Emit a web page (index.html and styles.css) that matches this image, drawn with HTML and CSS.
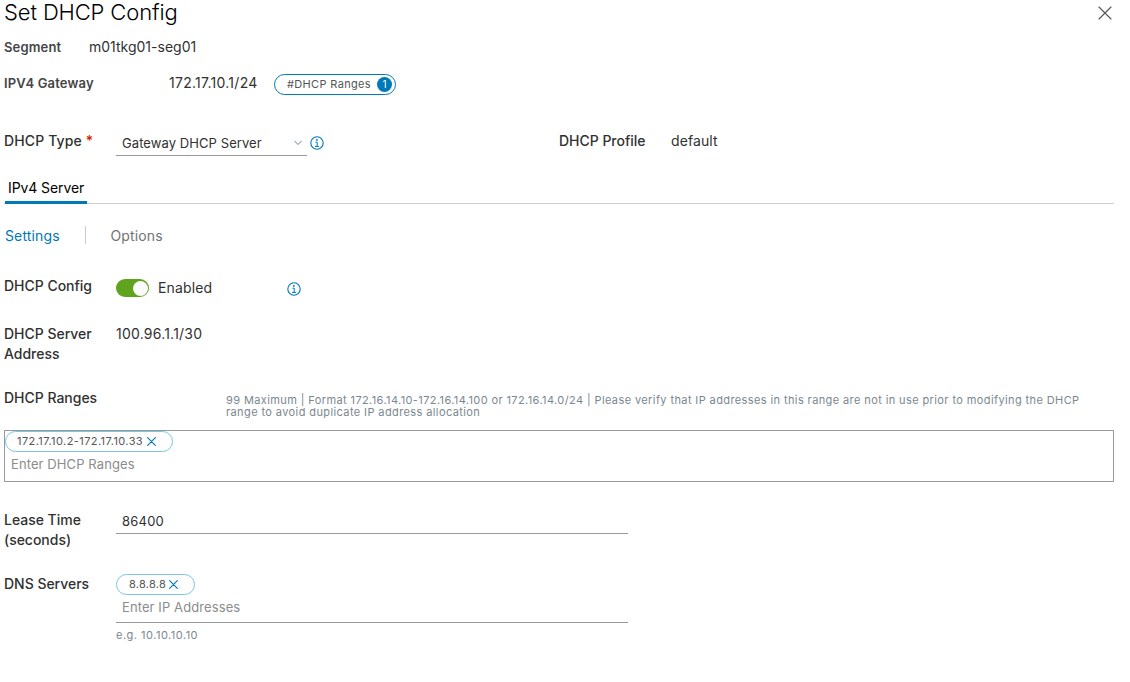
FILE: index.html
```
<!DOCTYPE html>
<html lang="en">
<head>
<meta charset="utf-8">
<title>Set DHCP Config</title>
<link rel="stylesheet" href="styles.css">
</head>
<body>
<svg width="0" height="0" class="sprite" aria-hidden="true">
  <symbol id="info" viewBox="0 0 14 14">
    <circle cx="7" cy="7" r="6.2" fill="none" stroke="currentColor" stroke-width="1.1"/>
    <circle cx="6.9" cy="3.9" r="0.95" fill="currentColor"/>
    <path d="M5.4 6.2h1.8v4M5 10.4h4" fill="none" stroke="currentColor" stroke-width="1"/>
  </symbol>
  <symbol id="cross" viewBox="0 0 14 14">
    <path d="M1 1l12 12M13 1L1 13" fill="none" stroke="currentColor" stroke-width="var(--cross-stroke)" stroke-linecap="round"/>
  </symbol>
</svg>
<main class="dialog">
  <header class="header">
    <h1 class="title">Set DHCP Config</h1>
    <svg class="close"><use href="#cross"/></svg>
  </header>

  <section class="summary">
    <div class="summary-row segment"><span class="summary-label">Segment</span><span class="segment-name">m01tkg01-seg01</span></div>
    <div class="summary-row gateway">
      <span class="summary-label">IPV4 Gateway</span><span class="digits">172.17.10.1/24</span>
      <span class="ranges-pill"><span class="pill-text">#DHCP Ranges</span><span class="count">1</span></span>
    </div>
  </section>

  <section class="type-row">
    <label class="label">DHCP Type <span class="required">*</span></label>
    <div class="select"><span>Gateway DHCP Server</span>
      <svg class="caret" viewBox="0 0 8 6"><path d="M0.5 1L4 4.5 7.5 1" fill="none" stroke="currentColor" stroke-width="1.2"/></svg>
    </div>
    <svg class="info type-info"><use href="#info"/></svg>
    <div class="profile"><span class="label">DHCP Profile</span><span>default</span></div>
  </section>

  <nav class="tabs"><span class="tab">IPv4 Server</span></nav>
  <nav class="subtabs"><span class="subtab active">Settings</span><span class="subtab">Options</span></nav>

  <section class="field config">
    <label class="label">DHCP Config</label>
    <div class="toggle-group"><span class="toggle"></span><span class="enabled">Enabled</span><svg class="info"><use href="#info"/></svg></div>
  </section>

  <section class="field address">
    <label class="label">DHCP Server Address</label>
    <span class="digits">100.96.1.1/30</span>
  </section>

  <section class="field ranges">
    <label class="label">DHCP Ranges</label>
    <p class="help range-help"><span>99 Maximum | Format 172.16.14.10-172.16.14.100 or 172.16.14.0/24 | Please verify that IP addresses in this range are not in use prior to modifying the DHCP</span><br>range to avoid duplicate IP address allocation</p>
  </section>
  <div class="range-box">
    <span class="chip"><span>172.17.10.2-172.17.10.33</span><svg class="remove"><use href="#cross"/></svg></span>
    <span class="placeholder">Enter DHCP Ranges</span>
  </div>

  <section class="field lease">
    <label class="label">Lease Time (seconds)</label>
    <div class="input digits">86400</div>
  </section>

  <section class="field dns">
    <label class="label">DNS Servers</label>
    <div class="dns-control">
      <div class="dns-input">
        <span class="chip"><span class="dns-text">8.8.8.8</span><svg class="remove"><use href="#cross"/></svg></span>
        <span class="placeholder">Enter IP Addresses</span>
      </div>
      <p class="help example">e.g. 10.10.10.10</p>
    </div>
  </section>
</main>
</body>
</html>
```
FILE: styles.css
```
* { box-sizing: border-box; }
body { margin: 0; background: #fff; color: #313131; font: 14px/20px Inter, "Noto Sans", sans-serif; letter-spacing: 0.08px; }
.sprite { position: absolute; }
.dialog { display: flex; flex-direction: column; height: 682px; padding: 0 16px 0 4px; overflow: hidden; }
.header { display: flex; justify-content: space-between; height: 37px; }
.title { margin: 0; font-size: 22px; line-height: 24px; font-weight: 350; letter-spacing: -0.13px; color: #000; }
.close { --cross-stroke: 1.15; width: 14px; height: 14px; margin: 6px 2px 0 0; color: #565656; }
.digits { letter-spacing: 0.22px; }
.label { font-weight: 500; letter-spacing: -0.02px; }

.summary { height: 94px; }
.summary-row { display: flex; height: 36px; }
.summary-label { font-size: 13px; font-weight: 600; letter-spacing: 0.15px; color: #454545; }
.segment .summary-label { width: 85px; }
.segment-name { letter-spacing: 0; }
.gateway .summary-label { width: 165px; }
.gateway .digits { width: 89px; letter-spacing: 0.27px; }
.ranges-pill { display: flex; align-items: center; justify-content: space-between; width: 122px; height: 21px; margin: 1px 0 0 16px; padding: 0 3px 0 12px; border: 1px solid #0079b8; border-radius: 11px; font-size: 11px; line-height: 19px; color: #565656; letter-spacing: 0.34px; }
.pill-text { padding-bottom: 1px; }
.count { width: 15px; height: 15px; border-radius: 50%; background: #0079b8; color: #fff; font-size: 10px; line-height: 15px; text-align: center; letter-spacing: 0; }

.type-row { display: flex; height: 47px; }
.type-row > .label { width: 112px; letter-spacing: 0.14px; }
.required { color: #c92100; }
.select { display: flex; align-items: center; justify-content: space-between; width: 191px; height: 25px; padding: 0 5px 0 6px; border-bottom: 1px solid #9a9a9a; font-size: 13px; }
.caret { width: 8px; height: 6px; color: #a3b3bd; }
.info { width: 14px; height: 14px; color: #0079b8; }
.type-info { margin: 5px 0 0 3px; }
.profile { display: flex; width: 300px; margin-left: 235px; }
.profile .label { width: 112px; }

.tabs { display: flex; height: 26px; border-bottom: 1px solid #ccc; }
.tab { height: 26px; margin-left: 1px; padding: 0 3px; border-bottom: 3px solid #0079b8; color: #000; letter-spacing: -0.1px; }
.subtabs { display: flex; height: 72px; padding: 22px 0 0 1px; }
.subtab { height: 20px; color: #737373; letter-spacing: 0.14px; }
.subtab.active { width: 80px; margin-right: 25px; color: #0079b8; }
.subtab.active { background: linear-gradient(#ccc, #ccc) right top / 1px 18px no-repeat; width: 81px; margin-right: 24.5px; }

.field { display: grid; grid-template-columns: 112px 512px; align-items: start; }
.config { height: 48px; }
.toggle-group { display: flex; align-items: center; height: 22px; padding-top: 2px; }
.toggle { width: 33px; height: 18px; padding: 1.5px; border-radius: 9px; background: #60a31e; }
.toggle::after { content: ""; display: block; width: 15px; height: 15px; margin-left: auto; border-radius: 50%; background: #fafafa; }
.enabled { width: 129px; margin-left: 9px; letter-spacing: 0.14px; }
.toggle-group .info { margin-top: 2px; }
.address { height: 64px; }
.ranges { grid-template-columns: 222px 1fr; height: 42px; }
.help { margin: 0; font-size: 11px; line-height: 12px; letter-spacing: 0.395px; color: #7b878f; }
.range-help { padding-top: 6px; white-space: nowrap; }
.range-box { display: flex; flex-direction: column; align-items: flex-start; height: 52px; border: 1px solid #9a9a9a; }
.chip { display: flex; align-items: center; height: 21px; padding: 0 16px 0 12px; border: 1px solid #79c6e1; border-radius: 11px; font-size: 11px; line-height: 19px; letter-spacing: 0.42px; color: #565656; }
.range-box .chip { padding-left: 11px; padding-right: 16px; }
.dns-text { letter-spacing: 0.25px; }
.remove { --cross-stroke: 1.7; width: 9px; height: 9px; margin: 0 0 1px 4px; color: #0079b8; }
.dns .remove { margin-left: 3px; }
.placeholder { padding: 2px 6px 0; font-size: 13px; color: #8c8c8c; letter-spacing: 0.1px; }
.lease { height: 64px; margin-top: 28px; }
.lease .label { width: 90px; }
.input { height: 24px; padding: 2px 6px 0; border-bottom: 1px solid #9a9a9a; font-size: 13px; line-height: 19px; }
.dns-input { display: flex; flex-direction: column; align-items: flex-start; height: 49px; border-bottom: 1px solid #9a9a9a; }
.example { padding-top: 6px; letter-spacing: 0.5px; }
```
